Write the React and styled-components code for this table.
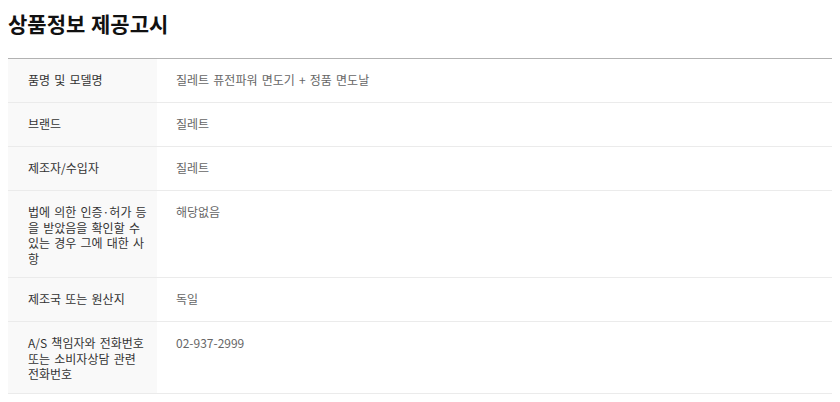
import React from "react";
import styled, { createGlobalStyle } from "styled-components";

const GlobalStyle = createGlobalStyle`
  body {
    margin: 8px;
    background: #ffffff;
    font-family: "Noto Sans CJK KR", "Noto Sans", sans-serif;
  }
`;

const Section = styled.section`
  display: flex;
  flex-direction: column;
`;

const Title = styled.h2`
  margin: 0 0 19px;
  font-size: 21px;
  line-height: 31px;
  font-weight: 700;
  word-spacing: 1px;
  color: #111111;
`;

const Table = styled.div`
  display: flex;
  flex-direction: column;
  border-top: 1px solid #b2b2b2;
`;

const Row = styled.div`
  display: grid;
  grid-template-columns: 149px 1fr;
  min-height: 43px;
  border-bottom: 1px solid #ebebeb;
`;

const Cell = styled.div`
  padding: 13px 8px 11px 20px;
  font-size: 12px;
  line-height: 15.5px;
  word-spacing: 1.5px;
  word-break: break-all;
`;

const Label = styled(Cell)`
  background: #f9f9f9;
  color: #333333;
`;

const Value = styled(Cell)`
  padding-left: 19px;
  color: #666666;
`;

const rows = [
  ["품명 및 모델명", "질레트 퓨전파워 면도기 + 정품 면도날"],
  ["브랜드", "질레트"],
  ["제조자/수입자", "질레트"],
  ["법에 의한 인증·허가 등을 받았음을 확인할 수 있는 경우 그에 대한 사항", "해당없음"],
  ["제조국 또는 원산지", "독일"],
  ["A/S 책임자와 전화번호 또는 소비자상담 관련 전화번호", "02-937-2999"],
];

export default function App() {
  return (
    <>
      <GlobalStyle />
      <Section>
        <Title>상품정보 제공고시</Title>
        <Table>
          {rows.map(([label, value]) => (
            <Row key={label}>
              <Label>{label}</Label>
              <Value>{value}</Value>
            </Row>
          ))}
        </Table>
      </Section>
    </>
  );
}
